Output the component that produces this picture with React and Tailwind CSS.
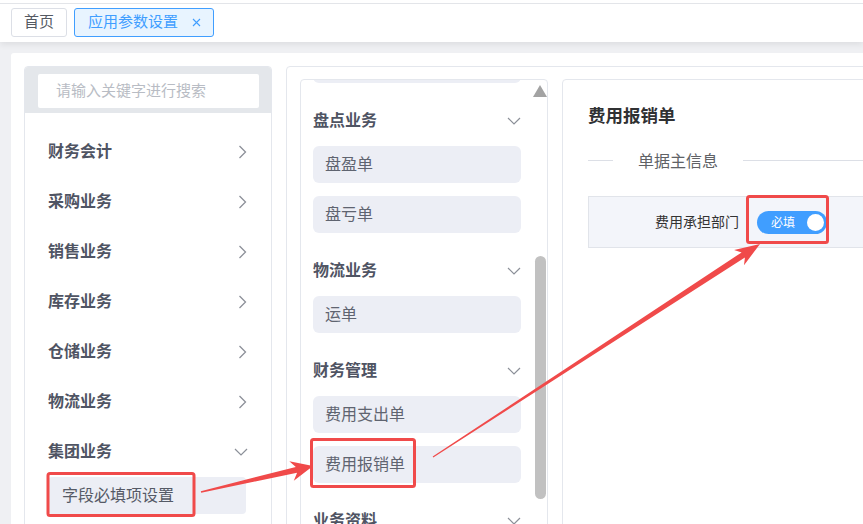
import React from "react";

const menus = ["财务会计", "采购业务", "销售业务", "库存业务", "仓储业务", "物流业务"];

const groups = [
  { title: "盘点业务", items: ["盘盈单", "盘亏单"] },
  { title: "物流业务", items: ["运单"] },
  { title: "财务管理", items: ["费用支出单", "费用报销单"] },
  { title: "业务资料", items: [] },
];

const ChevronRight = () => (
  <svg width="9" height="14" viewBox="0 0 9 14" fill="none">
    <polyline points="1.5,1 7.5,7 1.5,13" stroke="#8c9099" strokeWidth="1.3" />
  </svg>
);

const ChevronDown = () => (
  <svg width="14" height="8" viewBox="0 0 14 8" fill="none">
    <polyline points="1,1 7,7 13,1" stroke="#8c9099" strokeWidth="1.2" />
  </svg>
);

// tapered arrow: thin tail, thick neck, notched head
const arrowPoints = (tx, ty, px, py, head, half, neck, tail) => {
  const len = Math.hypot(px - tx, py - ty);
  const ux = (px - tx) / len;
  const uy = (py - ty) / len;
  const nx = -uy;
  const ny = ux;
  const at = (d, w) => [px - ux * d + nx * w, py - uy * d + ny * w];
  const pts = [
    [tx + nx * tail, ty + ny * tail],
    at(head - 5, neck),
    at(head, half),
    [px, py],
    at(head, -half),
    at(head - 5, -neck),
    [tx - nx * tail, ty - ny * tail],
  ];
  return pts.map((p) => p.map((v) => v.toFixed(1)).join(",")).join(" ");
};

const Marks = () => (
  <svg
    className="absolute inset-0 pointer-events-none"
    width="863"
    height="524"
    viewBox="0 0 863 524"
  >
    <g fill="none" stroke="#f04a4a" strokeWidth="3">
      <rect x="48" y="473.5" width="146" height="42" rx="2" />
      <rect x="311.5" y="439.5" width="103" height="47" rx="2" />
      <rect x="747.5" y="196.5" width="80" height="46" rx="2" />
    </g>
    <polygon fill="#f04a4a" points={arrowPoints(201, 492, 313, 466, 22, 10, 3, 0.8)} />
    <polygon fill="#f04a4a" points={arrowPoints(433, 457, 760, 244, 25, 9, 3, 0.6)} />
  </svg>
);

export default function App() {
  return (
    <div className="relative w-[863px] h-[524px] overflow-hidden bg-white font-['Noto_Sans_CJK_SC',sans-serif]">
      {/* tab strip */}
      <div className="relative z-10 pt-[3px] bg-white shadow-[0_3px_6px_rgba(0,0,0,0.07)]">
        <div className="h-[39px] border-t border-[#e3e5e9] flex items-start gap-[7px] px-[11px] pt-[4px]">
          <div className="h-[29px] px-[12px] pb-[2px] flex items-center border border-[#dcdfe6] rounded-[3px] text-[15px] text-[#555a63]">
            首页
          </div>
          <div className="h-[29px] w-[140px] pl-[13px] pb-[2px] flex items-center border border-[#409eff] bg-[#e8f4ff] rounded-[3px] text-[15px] text-[#409eff]">
            应用参数设置
            <svg className="ml-[14px] mt-[2px]" width="9" height="9" viewBox="0 0 9 9">
              <path d="M1 1 L8 8 M8 1 L1 8" stroke="#409eff" strokeWidth="1.1" />
            </svg>
          </div>
        </div>
      </div>

      <div className="bg-[#eff0f3] h-[482px] pl-[11px] pt-[11px]">
        <div className="bg-white w-[920px] h-[500px] rounded-[3px] pl-[13px] pt-[13px] flex gap-[14px]">
          {/* category menu */}
          <div className="w-[248px] h-[480px] border border-[#e4e7ed] rounded-[4px] overflow-hidden">
            <div className="bg-[#e4e7eb] pt-[7px] pb-[5px] pl-[13px] pr-[12px]">
              <div className="h-[34px] bg-white rounded-[2px] flex items-center pl-[18px] pb-[2px] text-[15px] text-[#b8bcc4]">
                请输入关键字进行搜索
              </div>
            </div>
            <div className="pt-[14px]">
              {menus.map((m) => (
                <div key={m} className="h-[50px] flex items-center justify-between pl-[23px] pr-[24px]">
                  <span className="text-[16px] font-bold text-[#4f5463] -mt-[4px]">{m}</span>
                  <ChevronRight />
                </div>
              ))}
              <div className="h-[50px] flex items-center justify-between pl-[23px] pr-[23px]">
                <span className="text-[16px] font-bold text-[#4f5463] -mt-[4px]">集团业务</span>
                <ChevronDown />
              </div>
              <div className="ml-[23px] mr-[25px] h-[37px] bg-[#eceef5] rounded-[4px] flex items-center pl-[14px] pb-[4px] text-[16px] text-[#555a66]">
                字段必填项设置
              </div>
            </div>
          </div>

          <div className="w-[620px] h-[480px] border border-[#e4e7ed] rounded-[4px] pl-[13px] pt-[12px] flex gap-[14px]">
            {/* document list */}
            <div className="relative w-[248px] h-[460px] border border-[#e4e7ed] rounded-[4px] overflow-hidden">
              <div className="-mt-[34px] pl-[12px] pr-[26px]">
                <div className="h-[37px] mb-[13px] bg-[#eceef5] rounded-[6px]" />
                {groups.map((g) => (
                  <div key={g.title}>
                    <div className="h-[50px] flex items-center justify-between">
                      <span className="text-[16px] font-bold text-[#4f5463] -mt-[4px]">{g.title}</span>
                      <ChevronDown />
                    </div>
                    {g.items.map((it) => (
                      <div
                        key={it}
                        className="h-[37px] mb-[13px] bg-[#eceef5] rounded-[6px] flex items-center pl-[12px] pb-[4px] text-[16px] text-[#5f6470]"
                      >
                        {it}
                      </div>
                    ))}
                  </div>
                ))}
              </div>
              {/* scrollbar */}
              <div className="absolute top-[5px] right-0 w-[14px] flex flex-col items-center">
                <svg width="14" height="12" viewBox="0 0 14 12">
                  <polygon points="7,0 14,12 0,12" fill="#a3a3a3" />
                </svg>
                <div className="mt-[159px] w-[11px] h-[243px] bg-[#c1c1c1] rounded-full" />
              </div>
            </div>

            {/* field settings */}
            <div className="w-[340px] h-[460px] border border-[#e4e7ed] rounded-[4px] pl-[25px] pt-[23px]">
              <div className="text-[17.5px] leading-[24px] font-bold text-[#303133]">费用报销单</div>
              <div className="mt-[21px] h-[24px] flex items-center">
                <div className="w-[25px] h-px bg-[#dcdfe6]" />
                <span className="mx-[25px] text-[16px] text-[#606266]">单据主信息</span>
                <div className="flex-1 h-px bg-[#dcdfe6]" />
              </div>
              <div className="mt-[24px] h-[52px] bg-[#f3f5fa] border border-[#e1e4ea] flex items-center">
                <span className="w-[150px] text-right text-[14px] text-[#333] -mt-[2px]">费用承担部门</span>
                <div className="ml-[18px] w-[70px] h-[23px] rounded-full bg-[#409eff] flex items-center justify-between pl-[14px] pr-[3px]">
                  <span className="text-[12px] text-white">必填</span>
                  <div className="w-[17px] h-[17px] rounded-full bg-white" />
                </div>
              </div>
            </div>
          </div>
        </div>
      </div>

      <Marks />
    </div>
  );
}
